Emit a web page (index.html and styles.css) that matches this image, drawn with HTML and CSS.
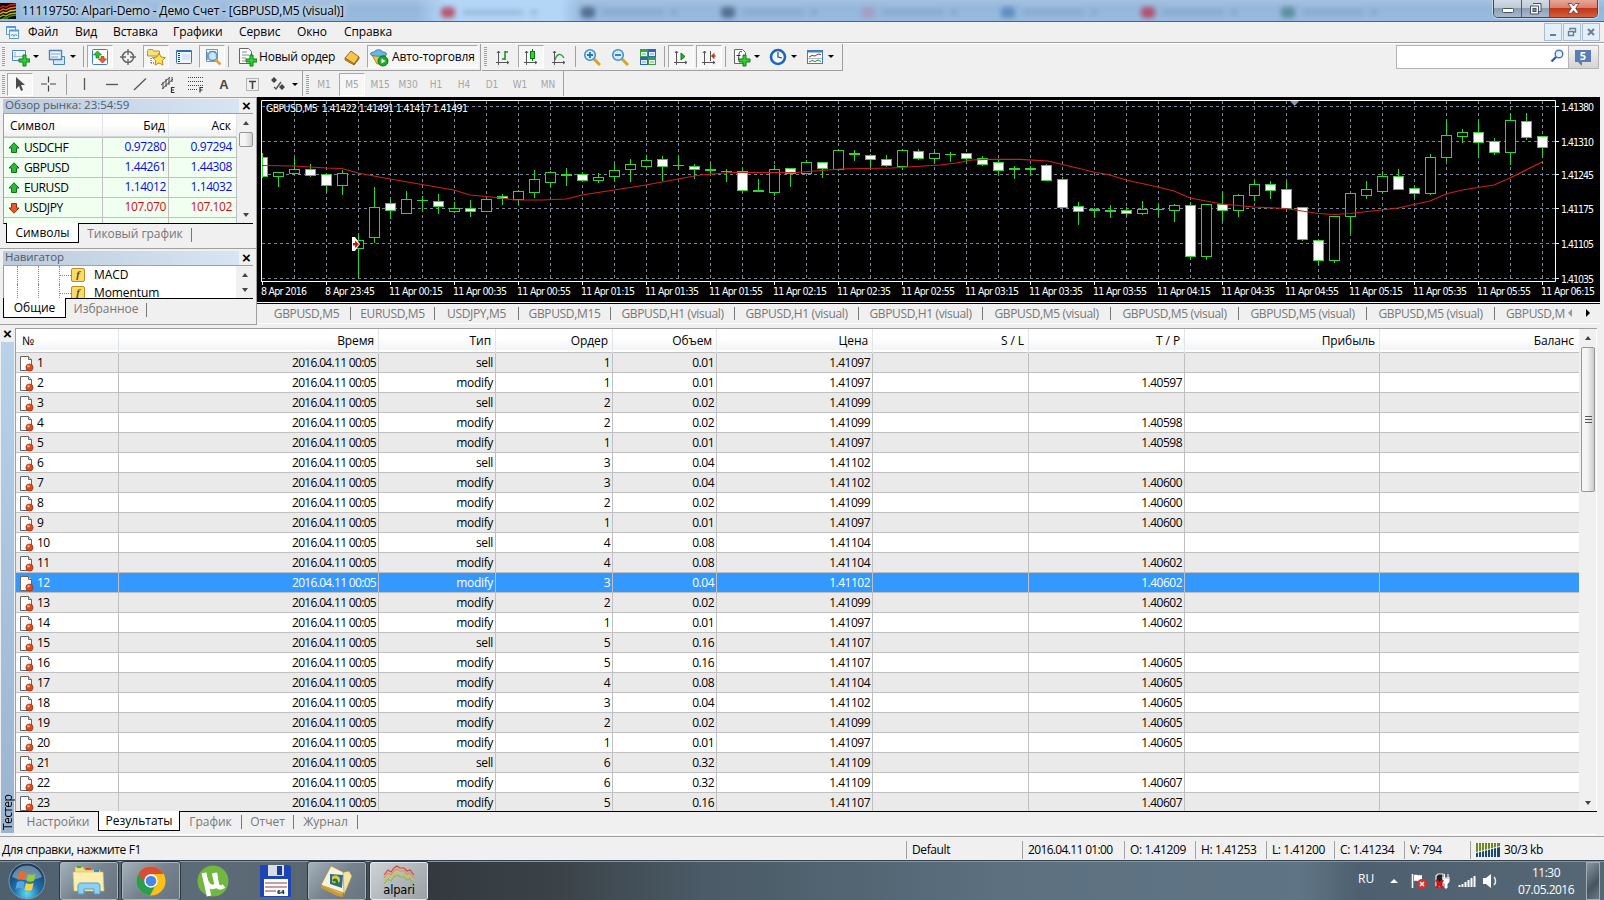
FILE: index.html
```html
<!DOCTYPE html>
<html lang="ru">
<head>
	<meta charset="utf-8">
	<title>11119750: Alpari-Demo - Демо Счет</title>
	<link rel="stylesheet" href="styles.css">
</head>
<body>

<div class="titlebar">
	<svg class="app-logo" width="16" height="16" viewBox="0 0 16 16"><rect width="16" height="16" fill="#150800"/><g fill="none" stroke-width="1.3"><path d="M0 5l3-2 3 1 4-2 6-1" stroke="#e02010"/><path d="M0 8l3-2 3 1 4-2 6-1" stroke="#f06a10"/><path d="M0 11l3-2 3 1 4-2 6-1" stroke="#f0c020"/><path d="M0 14l3-2 3 1 4-2 6-1" stroke="#90c020"/><path d="M2 16l2-1 3 0 3-2 6-1" stroke="#2a9a20"/></g></svg>
	<span class="title-text">11119750: Alpari-Demo - Демо Счет - [GBPUSD,M5 (visual)]</span>
	<div class="glass">
		<i class="g-red"></i><i class="g-dark"></i><i class="g-dark"></i><i class="g-pink"></i><i class="g-blue"></i><i class="g-red"></i><i class="g-green"></i>
	</div>
	<div class="win-buttons">
		<span class="wb"><svg width="12" height="12"><rect x=".5" y="5.5" width="11" height="4" rx="1" fill="#fff" stroke="#4a5460"/></svg></span>
		<span class="wb"><svg width="13" height="13"><path d="M4 1.5h8v8h-3M1.500 4h8v8h-8z" fill="#eef2f6" stroke="#4a5460"/><rect x="4" y="6.500" width="3" height="3" fill="#8b9098" stroke="#4a5460"/></svg></span>
		<span class="wb wb-close"><svg width="13" height="11"><path d="M1 .5h3.500l2 2.500 2-2.500H12L8.700 5.300 12 10.300H8.500l-2-2.700-2 2.700H1l3.300-5z" fill="#fff" stroke="#5d3a3a" stroke-width=".8"/></svg></span>
	</div>
</div>

<div class="menubar">
	<svg class="doc-icon" width="15" height="15" viewBox="0 0 15 15"><g fill="#eef6fd" stroke="#5b9ad0"><path d="M1.500 1.500h9v8h-9z"/><path d="M1 2h10" stroke-width="2"/><path d="M4.500 5.500h9v8h-9z"/><path d="M4 5.500h10" stroke-width="2"/><path d="M6 11l1.500-2 1.500 2.500 1.500-2.500 1.500 2" fill="none"/></g></svg>
	<span class="m1">Файл</span><span class="m2">Вид</span><span class="m3">Вставка</span><span class="m4">Графики</span><span class="m5">Сервис</span><span class="m6">Окно</span><span class="m7">Справка</span>
	<div class="mdi">
		<b><svg width="10" height="10"><path d="M2 8h6" stroke="#6a7f96" stroke-width="2"/></svg></b>
		<b><svg width="10" height="10"><path d="M3 3V1.500h5.500V5H7M1.500 4.500h5v4h-5z" fill="none" stroke="#6a7f96" stroke-width="1.400"/></svg></b>
		<b><svg width="10" height="10"><path d="M2 2l6 6M8 2L2 8" stroke="#6a7f96" stroke-width="2"/></svg></b>
	</div>
</div>

<div class="toolrow">
	<div class="toolbar main-tools">
		<span class="grip"></span>
		<span class="dd"><svg width="20" height="20" viewBox="0 0 20 20"><path d="M2.500 3.500h13v10h-13z" fill="#eef6fc" stroke="#4f87bd"/><path d="M5 5v6M3.500 9.500H13" stroke="#9bb9d5"/><path d="M9 12h4V8h3v4h4v3h-4v4h-3v-4H9z" fill="#2fd12f" stroke="#0b7d12"/></svg></span>
		<span class="dd"><svg width="20" height="20" viewBox="0 0 20 20"><path d="M6.500 9.500h11v8h-11z" fill="#d4e8f8" stroke="#4b83bb"/><path d="M2.500 3.500h12v9h-12z" fill="#edf6fd" stroke="#4b83bb" stroke-width="1.400"/><path d="M4 7h9M4 10h7" stroke="#7fa5cc"/></svg></span>
		<span class="sep"></span>
		<span class="btn on"><svg width="18" height="18" viewBox="0 0 18 18"><rect x="1.500" y="1.500" width="15" height="15" rx="1" fill="#fff" stroke="#3d7fc0"/><path d="M6.500 3l4 4h-2.500v3H5V7H2.500z" fill="#2fc12f" stroke="#0d7a15" stroke-width=".7"/><path d="M11.500 15l4-4H13V8.500h-3V11H7.500z" fill="#ee6030" stroke="#a03010" stroke-width=".7"/></svg></span>
		<span class="btn"><svg width="18" height="18" viewBox="0 0 18 18"><circle cx="9" cy="9" r="5.500" fill="none" stroke="#666" stroke-width="1.500"/><path d="M9 1v6M9 11v6M1 9h6M11 9h6" stroke="#666" stroke-width="1.300"/></svg></span>
		<span class="btn on"><svg width="20" height="20" viewBox="0 0 20 20"><path d="M1.500 9V3.500l1-1h4l1 1.500h6V9z" fill="#f5e17b" stroke="#b9962a"/><path d="M5 11v6M5 16h4" stroke="#444" stroke-dasharray="1 1"/><path d="M13 6l2 4 4.500.6-3.300 3 .8 4.500-4-2.200-4 2.200.8-4.500-3.300-3L11 10z" fill="#ffe45a" stroke="#b48c13"/></svg></span>
		<span class="btn"><svg width="18" height="18" viewBox="0 0 18 18"><rect x="1.500" y="2.500" width="15" height="13" rx="1" fill="#eef6fd" stroke="#2f78bd"/><path d="M1.500 3h15" stroke="#2c6cb0" stroke-width="2"/><path d="M4 5v10" stroke="#1c3c70" stroke-width="2" stroke-dasharray="1 1"/><path d="M7 7h8M7 9h8M7 11h8" stroke="#bed5ec"/></svg></span>
		<span class="btn on"><svg width="20" height="20" viewBox="0 0 20 20"><path d="M4.500 2.500h11v12h-11z" fill="#eef4fa" stroke="#7d99b5"/><path d="M5 5v8M8 4v9M13 4v6" stroke="#506c8a"/><circle cx="10.500" cy="9" r="4.500" fill="#c8e3f6" fill-opacity=".8" stroke="#5490c0" stroke-width="1.300"/><path d="M13.500 12.500l5 5" stroke="#e0a92c" stroke-width="2.600"/></svg></span>
		<span class="sep"></span>
		<span class="btn wide order"><svg width="20" height="20" viewBox="0 0 20 20"><path d="M2.500 1.500h9l3 3v12h-12z" fill="#fff" stroke="#666"/><path d="M5 5h5M5 8h7M5 11h4M5 14h3" stroke="#888"/><path d="M9 12h4V8h3v4h4v3h-4v4h-3v-4H9z" fill="#2fd12f" stroke="#0b7d12"/></svg><em>Новый ордер</em></span>
		<span class="btn"><svg width="18" height="18" viewBox="0 0 18 18"><path d="M2 10L8 3l8 6-5 7z" fill="#f5c64b" stroke="#9a6b14"/><path d="M2 10v2l9 5v-1.500zM11 17l5-6V9z" fill="#c98f22" stroke="#8c5d10" stroke-width=".7"/></svg></span>
		<span class="btn wide auto on"><svg width="20" height="20" viewBox="0 0 20 20"><path d="M3 8l5 9h5l4-9z" fill="#f2cb3d" stroke="#b98b1a"/><path d="M1.500 7c0-2 3-2 4-2 1-3 7-3 8 0 2 0 4 .5 4 2 0 3-16 3-16 0z" fill="#6cb5e2" stroke="#3c86b8"/><circle cx="14" cy="14" r="5" fill="#22ab2c" stroke="#0d7216"/><path d="M12.500 11.500v5l4-2.500z" fill="#fff"/></svg><em>Авто-торговля</em></span>
	</div>
	<div class="toolbar chart-tools">
		<span class="grip"></span>
		<span class="btn"><svg width="18" height="18" viewBox="0 0 18 18"><path d="M4.500 3v14M2 14.500h13M3 5l1.500-2L6 5M13 13l2 1.500L13 16" stroke="#555" fill="none"/><path d="M11 4h3M11 3v9M8 11h3" stroke="#1e8b28" stroke-width="1.500"/></svg></span>
		<span class="btn on"><svg width="18" height="18" viewBox="0 0 18 18"><path d="M4.500 3v14M2 14.500h13M3 5l1.500-2L6 5M13 13l2 1.500L13 16" stroke="#555" fill="none"/><path d="M10.500 1v12" stroke="#087a12"/><rect x="8.500" y="3.500" width="4" height="7" fill="#31d23b" stroke="#087a12"/></svg></span>
		<span class="btn"><svg width="18" height="18" viewBox="0 0 18 18"><path d="M4.500 3v14M2 14.500h13M3 5l1.500-2L6 5M13 13l2 1.500L13 16" stroke="#555" fill="none"/><path d="M5 12c2-7 6-7 9-2" stroke="#2b9a35" fill="none" stroke-width="1.300"/></svg></span>
		<span class="sep"></span>
		<span class="btn"><svg width="18" height="18" viewBox="0 0 18 18"><path d="M11 11l6 6" stroke="#d8a51f" stroke-width="3"/><circle cx="7" cy="7" r="5.300" fill="#d5ecfb" stroke="#3f8ccb" stroke-width="1.500"/><path d="M7 4v6M4 7h6" stroke="#2875b8" stroke-width="1.800"/></svg></span>
		<span class="btn"><svg width="18" height="18" viewBox="0 0 18 18"><path d="M11 11l6 6" stroke="#d8a51f" stroke-width="3"/><circle cx="7" cy="7" r="5.300" fill="#d5ecfb" stroke="#3f8ccb" stroke-width="1.500"/><path d="M4 7h6" stroke="#2875b8" stroke-width="1.800"/></svg></span>
		<span class="btn"><svg width="18" height="18" viewBox="0 0 18 18"><path d="M1 1h8v8H1zM9 9h8v8H9z" fill="#3ea03a"/><path d="M9 1h8v8H9zM1 9h8v8H1z" fill="#2d67c0"/><path d="M2 4h6v4H2zM10 4h6v4h-6zM2 12h6v4H2zM10 12h6v4h-6z" fill="#e4eefb"/><path d="M3 6h4M11 6h4M3 14h4M11 14h4" stroke="#8aa"/></svg></span>
		<span class="sep"></span>
		<span class="btn on"><svg width="18" height="18" viewBox="0 0 18 18"><path d="M4.500 3v14M2 14.500h13M3 5l1.500-2L6 5M13 13l2 1.500L13 16" stroke="#555" fill="none"/><path d="M9 5v7l4-3.500z" fill="#27b335" stroke="#0c7a17"/></svg></span>
		<span class="btn on"><svg width="18" height="18" viewBox="0 0 18 18"><path d="M4.500 3v14M2 14.500h13M3 5l1.500-2L6 5M13 13l2 1.500L13 16M10.500 3v10" stroke="#555" fill="none"/><path d="M16 8h-4M14 5.500L11.500 8l2.500 2.500z" stroke="#bb3c14" fill="#bb3c14"/></svg></span>
		<span class="sep"></span>
		<span class="dd"><svg width="20" height="20" viewBox="0 0 20 20"><path d="M3.500 2.500h8l3 3v11h-11z" fill="#fff" stroke="#666"/><path d="M11 5c-3-2-3 1-3.500 8M5.500 8.500h4" fill="none" stroke="#333"/><path d="M8 12h4V8h3v4h4v3h-4v4h-3v-4H8z" fill="#2fd12f" stroke="#0b7d12"/></svg></span>
		<span class="dd"><svg width="20" height="20" viewBox="0 0 20 20"><circle cx="10" cy="10" r="7" fill="#eff7fe" stroke="#1e66bb" stroke-width="2.600"/><path d="M10 5v5l4 1" fill="none" stroke="#444" stroke-width="1.200"/></svg></span>
		<span class="dd"><svg width="20" height="20" viewBox="0 0 20 20"><rect x="2.500" y="3.500" width="15" height="13" fill="#fff" stroke="#3f7fbe"/><path d="M2 4.500h16" stroke="#3f7fbe" stroke-width="2"/><path d="M4 10l3-1.500 3 .5 3-2 3 .5" stroke="#a0281c" fill="none"/><path d="M3 11.500h14" stroke="#9bbbd8"/><path d="M4 15l3-1.500 3 1 3-1.500 3 1.500" stroke="#2a8a35" fill="none"/></svg></span>
	</div>
	<div class="search">
		<div class="search-box"><svg width="14" height="14" viewBox="0 0 14 14"><circle cx="9" cy="5" r="3.800" fill="#e6f2fc" stroke="#4b71bf" stroke-width="1.400"/><path d="M6 8l-4.500 4.500" stroke="#2b57b5" stroke-width="2.300"/></svg></div>
		<div class="chat"><span>5</span></div>
	</div>
</div>

<div class="toolrow second">
	<div class="toolbar draw-tools">
		<span class="grip"></span>
		<span class="btn on"><svg width="18" height="18" viewBox="0 0 18 18"><path d="M5 2v12l3-3 2 5 2-1-2-5h4z" fill="#4a4a4a"/></svg></span>
		<span class="btn"><svg width="18" height="18" viewBox="0 0 18 18"><path d="M9.500 1.500v6M9.500 10.500v6M2 9h6M11 9h6" stroke="#444" stroke-width="1.200"/></svg></span>
		<span class="sep"></span>
		<span class="btn"><svg width="18" height="18"><path d="M9.500 3v12" stroke="#555" stroke-width="1.300"/></svg></span>
		<span class="btn"><svg width="18" height="18"><path d="M3 9.500h12" stroke="#555" stroke-width="1.300"/></svg></span>
		<span class="btn"><svg width="18" height="18"><path d="M3 15L15 3.500" stroke="#555" stroke-width="1.300"/></svg></span>
		<span class="btn"><svg width="18" height="18" viewBox="0 0 18 18"><path d="M2 10L11 2M3 14L14 4M4 7v7M7 4v8M10 3v7M13 2v5" stroke="#444"/><path d="M15.500 12.500h-3v5h3M12.500 15h2.500" fill="none" stroke="#333" stroke-width="1.200"/></svg></span>
		<span class="btn"><svg width="18" height="18" viewBox="0 0 18 18"><path d="M1 2.500h15M1 6.500h15M1 10.500h15M1 14.500h9" stroke="#444" stroke-dasharray="1 1"/><path d="M16 12.500h-3v5M13 15h2.500" fill="none" stroke="#333" stroke-width="1.200"/></svg></span>
		<span class="btn letter">A</span>
		<span class="btn"><svg width="18" height="18" viewBox="0 0 18 18"><rect x="3.500" y="3.500" width="12" height="12" fill="none" stroke="#777" stroke-dasharray="1 1"/><path d="M6 6.500h7M9.500 6.500V14" stroke="#444" stroke-width="1.600"/></svg></span>
		<span class="dd"><svg width="18" height="18" viewBox="0 0 18 18"><path d="M5 2l3 3-3 3-3-3zM13 9l3 3-3 3-3-3z" fill="#444"/><path d="M5 12l2 2 5-7" fill="none" stroke="#555" stroke-width="1.400"/></svg></span>
	</div>
	<div class="toolbar period-tools">
		<span class="grip"></span>
		<span class="btn">M1</span><span class="btn on">M5</span><span class="btn">M15</span><span class="btn">M30</span><span class="btn">H1</span><span class="btn">H4</span><span class="btn">D1</span><span class="btn">W1</span><span class="btn">MN</span>
	</div>
</div>

<div class="workspace">
	<div class="side">
		<div class="panel market">
			<div class="caption"><span>Обзор рынка: 23:54:59</span><i class="x">×</i></div>
			<div class="panel-body">
				<div class="quotes">
					<div class="q-head"><span>Символ</span><span>Бид</span><span>Аск</span></div>
					<div class="q-row up"><span><svg width="12" height="12"><use href="#arrow"/></svg>USDCHF</span><span>0.97280</span><span>0.97294</span></div>
					<div class="q-row up"><span><svg width="12" height="12"><use href="#arrow"/></svg>GBPUSD</span><span>1.44261</span><span>1.44308</span></div>
					<div class="q-row up"><span><svg width="12" height="12"><use href="#arrow"/></svg>EURUSD</span><span>1.14012</span><span>1.14032</span></div>
					<div class="q-row down"><span><svg width="12" height="12"><use href="#arrow"/></svg>USDJPY</span><span>107.070</span><span>107.102</span></div>
					<div class="q-row"><span></span><span></span><span></span></div>
				</div>
				<div class="scroll"><i class="up-arrow"></i><i class="thumb"></i><i class="down-arrow"></i></div>
			</div>
			<div class="tabs"><span class="tab active t-sym">Символы</span><span class="tab t-tick">Тиковый график</span></div>
		</div>
		<div class="panel navi">
			<div class="caption"><span>Навигатор</span><i class="x">×</i></div>
			<div class="panel-body">
				<div class="tree">
					<div class="node"><u></u><u></u><u></u><b>f</b>MACD</div>
					<div class="node"><u></u><u></u><u></u><b>f</b>Momentum</div>
				</div>
				<div class="scroll"><i class="up-arrow"></i><i class="down-arrow"></i></div>
			</div>
			<div class="tabs"><span class="tab active t-common">Общие</span><span class="tab t-fav">Избранное</span></div>
		</div>
	</div>
	<div class="chart-area">
		<svg id="chart" class="chart" width="1343" height="205" viewBox="257 97 1343 205"></svg>
		<div class="chart-tabs">
			<span class="w88">GBPUSD,M5</span><span class="w84">EURUSD,M5</span><span class="w84">USDJPY,M5</span><span class="w92">GBPUSD,M15</span><span class="w124">GBPUSD,H1 (visual)</span><span class="w124">GBPUSD,H1 (visual)</span><span class="w124">GBPUSD,H1 (visual)</span><span class="w128">GBPUSD,M5 (visual)</span><span class="w128">GBPUSD,M5 (visual)</span><span class="w128">GBPUSD,M5 (visual)</span><span class="w128">GBPUSD,M5 (visual)</span><span class="cut">GBPUSD,M</span>
			<i class="tri-left"></i><i class="tri-right"></i>
		</div>
	</div>
</div>

<div class="tester">
	<div class="tester-side"><i class="x">×</i><div class="tester-caption">Тестер</div></div>
	<div class="tester-main">
		<div class="results">
			<div class="grid" id="results">
				<div class="row head"><span>№</span><span>Время</span><span>Тип</span><span>Ордер</span><span>Объем</span><span>Цена</span><span>S / L</span><span>T / P</span><span>Прибыль</span><span>Баланс</span></div>
			</div>
			<div class="scroll"><i class="up-arrow"></i><i class="thumb"></i><i class="down-arrow"></i></div>
		</div>
		<div class="tabs"><span class="tab t-set">Настройки</span><span class="tab active t-res">Результаты</span><span class="tab t-gr">График</span><span class="tab t-rep">Отчет</span><span class="tab t-jour">Журнал</span></div>
	</div>
</div>

<div class="statusbar">
	<span class="help">Для справки, нажмите F1</span><span class="s1">Default</span><span class="s2">2016.04.11 01:00</span><span class="s3">O: 1.41209</span><span class="s4">H: 1.41253</span><span class="s5">L: 1.41200</span><span class="s6">C: 1.41234</span><span class="s7">V: 794</span>
	<span class="s8"><svg width="24" height="14" viewBox="0 0 24 14"><path d="M0 0h24v3L0 9z" fill="#6b8a1e"/><path d="M0 10l24-6v10H0z" fill="#174a72"/><path d="M2.500 0v14M5.500 0v14M8.500 0v14M11.500 0v14M14.500 0v14M17.500 0v14M20.500 0v14" stroke="#f0f0f0"/></svg>30/3 kb</span>
</div>

<div class="taskbar">
	<div class="start"><svg width="38" height="38" viewBox="0 0 38 38"><defs><radialGradient id="orb" cx=".5" cy=".85" r=".8"><stop offset="0" stop-color="#5fd8f5"/><stop offset=".45" stop-color="#1f6ea8"/><stop offset="1" stop-color="#16395c"/></radialGradient></defs><circle cx="19" cy="19" r="18" fill="url(#orb)" stroke="#7d97ab"/><path d="M4 15a15.500 15.500 0 0130 0c-8 4-22 4-30 0z" fill="#fff" opacity=".35"/><path d="M11 11c3-2 5-1.500 7.500 0L17 18c-2.500-1.500-5-1.500-7.500 0z" fill="#ee6a2c"/><path d="M20 12c2.500 1.500 5 1 7.500 0L26 19c-2.500 1-5 1-7.500 0z" fill="#9acb3b"/><path d="M9 20c3-1.500 5-1.500 7.500 0L15 27c-2.500-1.500-5-1.500-7.500 0z" fill="#4fa8e6"/><path d="M18 21c2.500 1.500 5 1 7.500 0L24 28c-2.500 1-5 1-7.500 0z" fill="#fbd23c"/></svg></div>
	<div class="task open t-explorer"><svg width="34" height="32" viewBox="0 0 34 32"><path d="M3 2h8l2 3h15v4H3z" fill="#f3dc86" stroke="#c9a94a" stroke-width=".6"/><path d="M5 1h4v2H5z" fill="#2ba84a"/><path d="M14 3h5v2h-5z" fill="#d9472b"/><path d="M22 5h5v2h-5z" fill="#2a7fc4"/><path d="M1 7h30l1 19H2z" fill="#fbeeae" stroke="#d7bd62" stroke-width=".6"/><path d="M6 29V21c0-2 1-3 3-3h16c2 0 3 1 3 3v8h-6v-5H12v5z" fill="#8fd0f2" stroke="#4a9fd0"/></svg></div>
	<div class="task open t-chrome"><svg width="30" height="30" viewBox="0 0 30 30"><circle cx="15" cy="15" r="14.500" fill="#fbc116"/><path d="M2.400 7.700A14.500 14.500 0 0014 29.500l6-11L15 15l-5 1z" fill="#2a9d55"/><path d="M2.400 7.700A14.500 14.500 0 0127.600 8H15a7 7 0 00-6.500 9z" fill="#dc4a38"/><circle cx="15" cy="15" r="6.700" fill="#fff"/><circle cx="15" cy="15" r="5.300" fill="#4a86e8"/></svg></div>
	<div class="task t-ut"><svg width="32" height="32" viewBox="0 0 32 32"><circle cx="16" cy="16" r="15.500" fill="#72b840"/><path d="M7 8c1 5 2 13 8 14 4 0 5-3 4-7l-1-7" fill="none" stroke="#fff" stroke-width="4.500"/><path d="M17 8l3 12c1 3 4 3 7 1M7 8l5 23" fill="none" stroke="#fff" stroke-width="4.500"/></svg></div>
	<div class="task t-save"><svg width="31" height="32" viewBox="0 0 31 32"><path d="M0 0h29l2 2v30H0z" fill="#1c46b8"/><path d="M8 0h16v11H8z" fill="#d8dde6"/><path d="M17 1h5v9h-5z" fill="#1c3a96"/><path d="M4 14h24v17H4z" fill="#fff"/><path d="M5 18h22M5 22h22M5 26h11" stroke="#9a3a3a"/><text x="17" y="28.500" class="floppy-text">64</text></svg></div>
	<div class="task open t-photo"><svg width="34" height="32" viewBox="0 0 34 32"><path d="M1 21l17-7 14-5-9 20-5 2z" fill="#e0b54a" stroke="#8d6a22" stroke-width=".7"/><path d="M20 8l9-2 3 5-8 19z" fill="#f4e3a6" stroke="#a58541" stroke-width=".6"/><path d="M1 20L11 1l12 6 1 21z" fill="#fbf4d4" stroke="#a58541" stroke-width=".6"/><path d="M10 9l13 1-1 13-12-4z" fill="#2a6b9b"/><path d="M12 12c3-3 8-1 8 3s-5 4-8 2z" fill="#e2cc3a"/><path d="M13 16c3-3 5 0 3 4" fill="none" stroke="#1c7a3a" stroke-width="2.500"/><path d="M1 20l17 8 5 1v3l-6-1-16-8z" fill="#c89b37"/></svg></div>
	<div class="task open active t-alpari"><svg width="32" height="19" viewBox="0 0 32 19"><g fill="none" stroke-width="1.100"><path d="M1 10l4-5 3 2 3-4 3-2 3 2 4 0 3 3 3-1 4 5" stroke="#d8402a"/><path d="M1 13l4-5 3 2 3-4 3-2 3 2 4 0 3 3 3-1 4 5" stroke="#e58a5a"/><path d="M1 16l4-5 3 2 3-4 3-2 3 2 4 0 3 3 3-1 4 5" stroke="#d2c44a"/><path d="M1 19l4-5 3 2 3-4 3-2 3 2 4 0 3 3 3-1 4 5" stroke="#8aba54"/></g></svg><span>alpari</span></div>
	<div class="tray">
		<span class="lang">RU</span><i class="tri-up"></i>
		<svg width="18" height="18" viewBox="0 0 18 18"><path d="M2.500 2v14" stroke="#fff" stroke-width="1.600"/><path d="M4 3c3-1 4 1 8 0v6c-4 1-5-1-8 0z" fill="#fff"/><circle cx="12" cy="12" r="5" fill="#d8302a"/><path d="M10 10l4 4M14 10l-4 4" stroke="#fff" stroke-width="1.400"/></svg>
		<svg width="18" height="18" viewBox="0 0 18 18"><path d="M2 4l2-2h5v12H2z" fill="#222" stroke="#eee" stroke-width="1.200"/><path d="M8 6h8M10.500 2v4M14 2v4M9 7h6v3l-2 2v4h-2v-4l-2-2z" fill="#fff" stroke="#fff"/><path d="M2 8l7 8M9 8l-7 8" stroke="#e01212" stroke-width="2.600"/></svg>
		<svg width="18" height="14" viewBox="0 0 18 14"><path d="M1.500 13v-2M4.500 13v-3M7.500 13V8M10.500 13V6M13.500 13V4M16.500 13V2" stroke="#fff" stroke-width="2"/></svg>
		<svg width="16" height="16" viewBox="0 0 16 16"><path d="M1 5h3l5-4v14l-5-4H1z" fill="#fff"/><path d="M12 4c2 2 2 6 0 8" stroke="#e8eef2" fill="none" stroke-width="1.500"/></svg>
		<div class="clock"><div>11:30</div><div>07.05.2016</div></div>
		<div class="show-desktop"></div>
	</div>
</div>

<svg width="0" height="0" class="defs">
	<symbol id="arrow" viewBox="0 0 12 12"><path d="M6 .8l5 5.200H8.500v4.500h-5V6H1z"/></symbol>
	<symbol id="deal" viewBox="0 0 16 17"><path d="M1.500 1.500h8l3 3v11h-11z" fill="#fff" stroke="#666"/><path d="M9.500 1.500v3h3" fill="#ddd" stroke="#666"/><circle cx="10.500" cy="12.500" r="3.600" fill="#dd4a1c" stroke="#8e2a0c" stroke-width=".6"/><circle cx="9.500" cy="11.300" r="1.200" fill="#f7a98a"/></symbol>
</svg>
<script src="app.js"></script>
</body>
</html>
```
FILE: styles.css
```css
* {
	box-sizing: border-box;
}
body {
	margin: 0;
	width: 1604px;
	height: 900px;
	overflow: hidden;
	background: #f0f0f0;
	font-family: "Open Sans", "Noto Sans", sans-serif;
	font-size: 12px;
	line-height: 16px;
	color: #000;
	display: flex;
	flex-direction: column;
}
i, em, b, u {
	font-style: normal;
	font-weight: normal;
	text-decoration: none;
}
svg {
	display: block;
	flex: none;
}
.defs {
	position: absolute;
}

/* window title */
.titlebar {
	height: 22px;
	display: flex;
	align-items: flex-start;
	background: linear-gradient(#a4c2e0, #95b7dc 40%, #98bade);
	border-bottom: 1px solid #4c6484;
	flex: none;
}
.app-logo {
	margin-top: 3px;
}
.title-text {
	width: 330px;
	padding: 3px 0 0 6px;
	white-space: nowrap;
	text-shadow: 0 0 6px #fff, 0 0 8px #fff;
	letter-spacing: -0.17px;
}
.glass {
	flex: 1;
	height: 21px;
	display: flex;
	align-items: center;
	gap: 126px;
	padding: 4px 0 0 95px;
	overflow: hidden;
	background: linear-gradient(90deg, transparent 70px, #b3d5f6 100px, #b3d5f6 215px, transparent 235px);
}
.glass i {
	width: 14px;
	height: 11px;
	flex: none;
	border-radius: 4px;
	filter: blur(2.5px);
	opacity: .75;
}
.glass i::after {
	content: "";
	display: block;
	width: 74px;
	height: 5px;
	margin: 3px 0 0 22px;
	background: linear-gradient(90deg, #7897ba 60px, transparent 60px 68px, #7090b5 68px);
	opacity: .6;
}
.g-dark { background: #3c5878; }
.g-red { background: #b9304a; }
.g-pink { background: #a996be; }
.g-blue { background: #4f7fb5; }
.g-green { background: #4a8289; }
.win-buttons {
	width: 105px;
	height: 18px;
	margin-right: 6px;
	display: flex;
	border: 1px solid #39485c;
	border-top: 0;
	border-radius: 0 0 5px 5px;
	overflow: hidden;
	box-shadow: 0 0 0 1px #c5d9ec;
}
.wb {
	width: 28px;
	border-right: 1px solid #4d5c70;
	display: flex;
	align-items: center;
	justify-content: center;
	background: linear-gradient(#d2dbe6, #c0cbd8 45%, #8d9db2 50%, #a9bad0);
}
.wb-close {
	flex: 1;
	border: 0;
	background: linear-gradient(#e6a798, #d9806c 45%, #bf3618 50%, #d4603c);
}

/* menu */
.menubar {
	height: 21px;
	display: flex;
	align-items: center;
	border-bottom: 1px solid #a0a0a0;
	padding-left: 5px;
	letter-spacing: -0.1px;
	flex: none;
}
.doc-icon {
	margin-right: 8px;
}
.m1 { width: 47px; }
.m2 { width: 38px; }
.m3 { width: 60px; }
.m4 { width: 66px; }
.m5 { width: 58px; }
.m6 { width: 47px; }
.mdi {
	margin-left: auto;
	display: flex;
	gap: 1px;
	padding-right: 4px;
}
.mdi b {
	width: 18px;
	height: 18px;
	border: 1px solid #a9bdd0;
	background: #e3effa;
	display: flex;
	align-items: center;
	justify-content: center;
}

/* toolbars */
.toolrow {
	height: 28px;
	display: flex;
	border-top: 1px solid #fff;
	flex: none;
}
.second {
	height: 26px;
	border-top: 0;
}
.toolbar {
	display: flex;
	align-items: center;
	height: 27px;
	border-bottom: 1px solid #a0a0a0;
	border-right: 1px solid #a0a0a0;
	margin-right: 1px;
	padding-bottom: 1px;
}
.second .toolbar {
	height: 25px;
	border-bottom: 0;
	padding: 1px 0 0;
}
.main-tools { width: 481px; }
.chart-tools { width: 361px; }
.draw-tools { width: 303px; }
.period-tools { width: 260px; }
.grip {
	width: 3px;
	height: 19px;
	margin: 0 2px 0 2px;
	background: repeating-linear-gradient(#a0a0a0 0 1px, #f0f0f0 1px 2px);
	flex: none;
}
.second .grip {
	margin-right: 1px;
}
.btn {
	width: 26px;
	height: 23px;
	margin: 0 1px;
	display: flex;
	align-items: center;
	justify-content: center;
	flex: none;
}
.on {
	border: 1px solid #a8a8a8;
	border-right-color: #fff;
	border-bottom-color: #fff;
	background: #f7f7f7;
}
.dd {
	width: 37px;
	display: flex;
	align-items: center;
	justify-content: space-between;
	padding: 0 5px 0 3px;
	flex: none;
}
.dd::after {
	content: "";
	border: 3px solid transparent;
	border-top-color: #000;
	border-bottom: 0;
}
.sep {
	width: 1px;
	height: 21px;
	margin: 0 2px;
	background: #a0a0a0;
	flex: none;
}
.draw-tools .sep {
	margin: 0 3px 0 4px;
}
.btn.wide {
	justify-content: flex-start;
	gap: 2px;
	white-space: nowrap;
	letter-spacing: -0.2px;
}
.btn.order { width: 105px; padding-left: 5px; }
.btn.auto { width: 111px; padding-left: 1px; }
.auto em {
	letter-spacing: -0.1px;
	padding-left: 1px;
}
.letter {
	font: bold 13px "Liberation Sans", sans-serif;
	color: #444;
}
.period-tools .btn {
	font: 10px "DejaVu Sans Condensed", sans-serif;
	color: #a5a5a5;
}
.search {
	margin: 1px 5px 0 auto;
	display: flex;
	height: 24px;
}
.search-box {
	width: 173px;
	border: 1px solid #b4b4b4;
	background: #fff;
	display: flex;
	align-items: center;
	justify-content: flex-end;
	padding: 0 4px 2px 0;
}
.chat {
	width: 30px;
	border: 1px solid #b4b4b4;
	border-left: 0;
	background: linear-gradient(#f4f4f4, #d4d4d4);
	padding: 4px 0 0 6px;
}
.chat span {
	display: block;
	position: relative;
	width: 16px;
	height: 12px;
	background: #5d7cb4;
	color: #fff;
	font-weight: bold;
	font-size: 11px;
	line-height: 12px;
	text-align: center;
}
.chat span::after {
	content: "";
	position: absolute;
	left: 3px;
	top: 12px;
	border-top: 4px solid #5d7cb4;
	border-left: 4px solid transparent;
}

/* side panels + chart */
.workspace {
	height: 228px;
	display: flex;
	flex: none;
}
.side {
	width: 257px;
	border-top: 1px solid #a0a0a0;
	display: flex;
	flex-direction: column;
}
.panel {
	border-right: 1px solid #a0a0a0;
	border-bottom: 1px solid #a0a0a0;
	padding-left: 3px;
	display: flex;
	flex-direction: column;
}
.market { height: 151px; }
.navi { height: 76px; padding-top: 2px; }
.market .caption { margin-top: 1px; }
.caption {
	height: 14px;
	display: flex;
	line-height: 12px;
	color: #4d5b6b;
	flex: none;
}
.caption span {
	width: 237px;
	padding-left: 2px;
	background: linear-gradient(90deg, #bccbdc, #d7e5f3);
	font-size: 11.5px;
	letter-spacing: -0.05px;
}
.x {
	font: bold 15px/13px "Liberation Sans", sans-serif;
	color: #000;
	width: 14px;
	text-align: left;
}
.caption .x {
	margin-left: 3px;
}
.panel-body {
	width: 250px;
	border: 1px solid #a0a0a0;
	border-bottom: 1px solid #000;
	border-right: 0;
	background: #fff;
	display: flex;
	overflow: hidden;
	flex: none;
}
.market .panel-body { height: 111px; }
.navi .panel-body { height: 34px; }
.quotes {
	width: 233px;
}
.q-head, .q-row {
	display: grid;
	grid-template-columns: 99px 66px 68px;
}
.q-head {
	height: 23px;
	line-height: 23px;
	background: linear-gradient(#fff 45%, #f1f2f4);
	border-bottom: 1px solid #d5d5d5;
}
.q-head span {
	border-right: 1px solid #e0e3e8;
	padding: 0 3px 0 6px;
}
.q-head span:last-child {
	padding-right: 5px;
}
.q-head span + span, .q-row span + span {
	text-align: right;
}
.q-row {
	height: 20px;
	line-height: 18px;
	background: #f0fff0;
	border-top: 1px solid #c0c0c0;
}
.q-row span {
	border-right: 1px solid #c0c0c0;
	padding: 0 2px 0 4px;
	display: block;
	letter-spacing: -0.4px;
}
.q-row span:first-child {
	display: flex;
	align-items: center;
	gap: 4px;
	color: #000;
	letter-spacing: -0.4px;
}
.q-row span:last-child {
	padding-right: 4px;
}
.up { color: #0c0cdc; }
.down { color: #d01010; }
.up svg { fill: #2fb63c; stroke: #107018; }
.down svg { fill: #e8592c; stroke: #96300e; transform: rotate(180deg); }
.scroll {
	width: 17px;
	background: #f0f0f0;
	display: flex;
	flex-direction: column;
	align-items: center;
	flex: none;
}
.up-arrow, .down-arrow {
	border: 3px solid transparent;
	flex: none;
}
.up-arrow {
	border-bottom: 4px solid #444;
	border-top: 0;
	margin: 7px 0;
}
.down-arrow {
	border-top: 4px solid #444;
	border-bottom: 0;
	margin: auto 0 6px;
}
.thumb {
	width: 14px;
	height: 15px;
	border: 1px solid #979797;
	border-radius: 2px;
	background: linear-gradient(90deg, #f5f5f5 40%, #d0d1d4);
}
.tabs {
	display: flex;
	color: #777;
	height: 22px;
}
.tab {
	text-align: center;
	line-height: 18px;
	height: 19px;
}
.tab.active {
	background: #fff;
	color: #000;
	border: 1px solid #000;
	border-top: 0;
	margin-top: -1px;
	height: 20px;
	line-height: 20px;
}
.t-sym { width: 73px; margin-left: 3px; }
.t-tick, .t-fav {
	border-right: 1px solid #777;
	height: 14px;
	margin-top: 4px;
	line-height: 12px;
	letter-spacing: -0.05px;
}
.t-tick { width: 113px; }
.tab.t-common { width: 63px; border-left: 0; border-left: 1px solid #000; }
.t-fav { width: 81px; }
.tree {
	width: 233px;
	line-height: 18px;
}
.node {
	display: flex;
	height: 18px;
	padding-left: 13px;
	align-items: center;
	letter-spacing: -0.1px;
}
.node u {
	width: 21px;
	height: 18px;
	border-left: 1px dotted #888;
	flex: none;
}
.node u:nth-child(3) {
	width: 12px;
	background: linear-gradient(90deg, #888 50%, transparent 50%) 0 9px / 2px 1px repeat-x;
}
.node b {
	width: 14px;
	height: 14px;
	margin-right: 9px;
	border: 1px solid #b98f1e;
	border-radius: 2px;
	background: #f7dc6c;
	font: italic bold 11px/11px "Liberation Serif", serif;
	text-align: center;
	color: #6b4a00;
}
.chart-area {
	width: 1343px;
	display: flex;
	flex-direction: column;
}
.chart {
	background: #000;
}
.chart text {
	fill: #fff;
	font: 10.5px "DejaVu Sans Condensed", "Noto Sans", sans-serif;
}
.chart-tabs {
	display: flex;
	align-items: center;
	border-top: 1px solid #fff;
	border-bottom: 1px solid #fff;
	box-shadow: inset 0 1px #000;
	height: 22px;
	padding-left: 6px;
	color: #777;
}
.chart-tabs span {
	border-right: 1px solid #777;
	line-height: 13px;
	text-align: center;
	white-space: nowrap;
	flex: none;
	letter-spacing: -0.35px;
}
.w88 { width: 88px; }
.w84 { width: 84px; }
.w92 { width: 92px; }
.w124 { width: 124px; }
.w128 { width: 128px; }
.chart-tabs .cut {
	width: 68px;
	padding-left: 11px;
	text-align: left;
	border: 0;
}
.tri-left, .tri-right {
	border: 4px solid transparent;
}
.tri-left { border-left: 0; border-right-color: #999; margin: 0 14px 0 5px; }
.tri-right { border-right: 0; border-left-color: #000; }

/* strategy tester */
.tester {
	height: 511px;
	display: flex;
	padding-top: 3px;
	flex: none;
}
.tester-side {
	width: 15px;
	display: flex;
	flex-direction: column;
}
.tester-side .x {
	height: 14px;
	padding-left: 3px;
	line-height: 11px;
}
.tester-caption {
	width: 13px;
	height: 491px;
	margin-left: 1px;
	writing-mode: vertical-rl;
	transform: rotate(180deg);
	line-height: 13px;
	padding-top: 3px;
	letter-spacing: -0.6px;
	background: linear-gradient(#9ab3d0, #bad1ea);
}
.tester-main {
	width: 1582px;
}
.results {
	height: 484px;
	border: 1px solid #a0a0a0;
	border-right: 0;
	border-bottom: 1px solid #000;
	background: #fff;
	display: flex;
	overflow: hidden;
}
.grid {
	width: 1564px;
	border-right: 1px solid #f0f0f0;
}
.row {
	display: grid;
	grid-template-columns: 103px 260px 117px 117px 104px 156px 156px 156px 195px 200px;
	height: 20px;
	line-height: 20px;
	border-bottom: 1px solid #c0c0c0;
	letter-spacing: -0.5px;
}
.row span {
	border-right: 1px solid #c0c0c0;
	padding-right: 2px;
	text-align: right;
}
.row span:nth-child(2) {
	letter-spacing: -0.68px;
}
.row span:nth-child(3) {
	letter-spacing: -0.35px;
}
.row span:first-child {
	display: flex;
	align-items: center;
	text-align: left;
	gap: 2px;
	padding-left: 3px;
}
.row span:last-child {
	border-right: 0;
}
.row:nth-child(even) {
	background: #eaeaea;
}
.row.selected {
	background: #3399ff;
	color: #fff;
}
.row.head {
	height: 24px;
	line-height: 24px;
	background: linear-gradient(#fff 40%, #f1f2f4);
	box-shadow: inset 0 -2px #fff;
}
.row.head span {
	padding-right: 4px;
	border-color: #e2e5ea;
	letter-spacing: -0.1px;
}
.row.head span:first-child {
	padding-left: 6px;
}
.row.head span:last-child {
	padding-right: 6px;
}
.results .thumb {
	height: 145px;
	display: flex;
	background: linear-gradient(90deg, #f5f5f5 40%, #c8cace);
	align-items: center;
	justify-content: center;
}
.results .scroll {
	width: 16px;
}
.results .thumb::before {
	content: "";
	width: 7px;
	height: 8px;
	background: repeating-linear-gradient(#555 0 1px, transparent 1px 3px);
}
.tester .tabs {
	height: 23px;
	border-bottom: 1px solid #fff;
}
.tester .t-set { width: 83px; line-height: 19px; padding-left: 3px; }
.tester .t-res { width: 82px; }
.t-gr, .t-rep, .t-jour {
	border-right: 1px solid #777;
	height: 14px;
	margin-top: 3px;
	line-height: 13px;
}
.t-gr { width: 62px; }
.t-rep { width: 52px; }
.t-jour { width: 64px; }

.statusbar {
	height: 24px;
	border-top: 1px solid #a0a0a0;
	display: flex;
	align-items: center;
	padding-top: 3px;
	letter-spacing: -0.4px;
	white-space: nowrap;
	flex: none;
}
.statusbar span + span {
	border-left: 1px solid #a0a0a0;
	height: 18px;
	line-height: 18px;
	padding-left: 5px;
}
.statusbar .help { width: 906px; padding-left: 2px; letter-spacing: -0.35px; }
.s1 { width: 116px; }
.s2 { width: 102px; }
.statusbar .s2 { letter-spacing: -0.65px; }
.s3 { width: 71px; }
.s4 { width: 71px; }
.s5 { width: 68px; }
.s6 { width: 70px; }
.s7 { width: 66px; }
.s8 { display: flex; align-items: center; gap: 4px; }

/* windows taskbar */
.taskbar {
	height: 40px;
	border-top: 1px solid #34424e;
	box-shadow: inset 0 1px #8695a1;
	display: flex;
	align-items: center;
	background: linear-gradient(90deg, #4e5f6d 0, #5b6b78 200px, #5a6771 300px, #33393f 430px, #3b4348 560px, #4a5a66 700px, #5c7080 1000px, #5f7484 1300px, #4e6070 1360px, #566875 1604px);
	flex: none;
}
.start {
	width: 60px;
	padding-left: 8px;
}
.task {
	width: 58px;
	height: 38px;
	margin-right: 4px;
	display: flex;
	align-items: center;
	justify-content: center;
}
.open {
	border: 1px solid #a9b4bd;
	outline: 1px solid #2c3740;
	border-radius: 2px;
	background: linear-gradient(135deg, #a5b0b8, #76838e 50%, #66747f);
}
.active.task {
	flex-direction: column;
	background: linear-gradient(135deg, #cfd3d6, #b3b8bc 50%, #9ba1a6);
	border-color: #e4e8ea;
}
.t-alpari span {
	font: 11.5px/13px "DejaVu Sans", sans-serif;
	letter-spacing: -0.2px;
	margin-bottom: -1px;
}
.floppy-text {
	font: bold 5.5px "DejaVu Sans", sans-serif;
}
.tray {
	margin-left: auto;
	display: flex;
	align-items: center;
	color: #fff;
	height: 38px;
}
.lang { width: 32px; margin-top: -4px; }
.tri-up {
	border: 4px solid transparent;
	border-top: 0;
	border-bottom-color: #fff;
	margin-right: 12px;
}
.tray svg { margin-right: 6px; }
.clock {
	width: 80px;
	margin-left: 2px;
	text-align: center;
	line-height: 17px;
	letter-spacing: -0.5px;
}
.show-desktop {
	width: 14px;
	height: 38px;
	margin: 0 4px 0 0;
	border: 1px solid #a0adb7;
	background: linear-gradient(135deg, #8696a2, #46545f 60%, #6a7985);
	flex: none;
}
```
FILE: app.js
```javascript
// deals: type, order, volume, price, take profit
var deals = [
	['sell', 1, '0.01', '1.41097', ''],
	['modify', 1, '0.01', '1.41097', '1.40597'],
	['sell', 2, '0.02', '1.41099', ''],
	['modify', 2, '0.02', '1.41099', '1.40598'],
	['modify', 1, '0.01', '1.41097', '1.40598'],
	['sell', 3, '0.04', '1.41102', ''],
	['modify', 3, '0.04', '1.41102', '1.40600'],
	['modify', 2, '0.02', '1.41099', '1.40600'],
	['modify', 1, '0.01', '1.41097', '1.40600'],
	['sell', 4, '0.08', '1.41104', ''],
	['modify', 4, '0.08', '1.41104', '1.40602'],
	['modify', 3, '0.04', '1.41102', '1.40602'],
	['modify', 2, '0.02', '1.41099', '1.40602'],
	['modify', 1, '0.01', '1.41097', '1.40602'],
	['sell', 5, '0.16', '1.41107', ''],
	['modify', 5, '0.16', '1.41107', '1.40605'],
	['modify', 4, '0.08', '1.41104', '1.40605'],
	['modify', 3, '0.04', '1.41102', '1.40605'],
	['modify', 2, '0.02', '1.41099', '1.40605'],
	['modify', 1, '0.01', '1.41097', '1.40605'],
	['sell', 6, '0.32', '1.41109', ''],
	['modify', 6, '0.32', '1.41109', '1.40607'],
	['modify', 5, '0.16', '1.41107', '1.40607']
];
var selected = 12;

var rows = '';
deals.forEach(function (d, i) {
	var n = i + 1;
	var cells = ['2016.04.11 00:05', d[0], d[1], d[2], d[3], '', d[4], '', ''];
	rows += '<div class="row' + (n == selected ? ' selected' : '') + '">' +
		'<span><svg width="16" height="17"><use href="#deal"/></svg>' + n + '</span>' +
		cells.map(function (c) { return '<span>' + c + '</span>'; }).join('') + '</div>';
});
document.getElementById('results').insertAdjacentHTML('beforeend', rows);

// candles: high, body top, body bottom, low, w = falling, b = rising
var candles = [
	[153,157,176,177,'w'],[172,172,176,186,'b'],[158,169,173,174,'b'],[164,169,175,176,'w'],[174,174,185,190,'w'],
	[170,173,185,194,'b'],[234,240,248,277,'b'],[187,207,237,242,'b'],[200,203,210,218,'w'],[191,199,213,213,'b'],
	[196,200,200,211,'b'],[194,201,206,213,'w'],[202,208,211,212,'b'],[200,208,211,216,'w'],[197,199,211,211,'b'],
	[194,196,198,204,'w'],[190,191,199,204,'b'],[170,179,192,197,'b'],[171,172,182,186,'b'],[168,175,175,185,'w'],
	[172,174,180,180,'w'],[173,177,180,182,'b'],[164,170,176,180,'b'],[159,164,169,181,'b'],[155,160,166,167,'b'],
	[156,159,166,180,'w'],[156,165,165,168,'b'],[164,166,169,178,'w'],[164,170,170,173,'w'],[169,171,171,181,'b'],
	[167,171,190,190,'w'],[179,191,191,191,'w'],[165,169,192,195,'b'],[168,168,173,186,'w'],[160,162,173,173,'b'],
	[162,162,168,177,'w'],[150,150,169,170,'b'],[150,154,154,160,'w'],[154,155,159,168,'w'],[155,159,165,166,'w'],
	[150,150,166,168,'b'],[149,151,158,159,'w'],[152,153,158,163,'b'],[152,154,154,161,'b'],[153,153,158,163,'w'],
	[156,158,164,165,'w'],[160,162,170,174,'w'],[166,169,169,178,'w'],[166,169,169,174,'w'],[164,165,180,180,'w'],
	[177,179,207,207,'w'],[202,206,211,224,'w'],[208,210,210,216,'w'],[205,211,211,217,'w'],[207,210,213,214,'w'],
	[201,209,213,214,'b'],[204,209,209,214,'b'],[204,205,210,221,'b'],[202,205,256,258,'w'],[204,204,256,259,'b'],
	[192,204,210,221,'w'],[194,195,210,216,'b'],[180,184,195,200,'b'],[181,184,190,198,'w'],[182,189,208,209,'w'],
	[207,207,239,240,'w'],[240,240,260,264,'w'],[216,216,260,262,'b'],[193,193,216,233,'b'],[181,189,195,198,'b'],
	[171,176,191,193,'b'],[169,176,189,189,'w'],[185,188,193,197,'w'],[154,157,193,194,'b'],[119,135,157,160,'b'],
	[129,132,136,142,'b'],[119,132,142,157,'w'],[138,141,152,154,'w'],[113,120,152,164,'b'],[113,121,137,139,'w'],
	[136,136,147,157,'w']
];
var average = '262,165.500 294,166 326,168 342,168.500 358,173 390,179 454,190 470,195 502,198 514,200 542,200 566,199 582,195 646,185 678,179 700,175 732,172.500 796,172.500 840,169 892,168 940,165 956,163 972,160 988,159.300 1020,159.300 1048,161 1096,172.500 1110,175 1126,180 1158,187 1174,191 1190,198 1222,204 1254,207 1286,208.500 1318,213.500 1334,214.500 1350,213.500 1398,208 1430,201 1446,194 1462,190 1494,185 1510,178 1542,162';
var prices = [[106,'1.41380'],[141,'1.41310'],[174,'1.41245'],[208,'1.41175'],[243,'1.41105'],[278,'1.41035']];
// after the first labels the axis goes on in steps of 20 minutes
var times = ['8 Apr 2016', '8 Apr 23:45'];
for (var m = 15; m <= 375; m += 20) {
	times.push('11 Apr 0' + Math.floor(m / 60) + ':' + ('0' + m % 60).slice(-2));
}

var s = '<g stroke="#778899" stroke-dasharray="3 3" shape-rendering="crispEdges">';
prices.forEach(function (p) {
	s += '<path d="M262 ' + (p[0] + .5) + 'H1555"/>';
});
for (var x = 294; x < 1555; x += 32) {
	s += '<path d="M' + (x + .5) + ' 101V281"/>';
}
s += '</g>';

s += '<g stroke="#2fd62f" shape-rendering="crispEdges">';
candles.forEach(function (c, i) {
	var x = 262 + i * 16;
	var left = i ? x - 5 : x, w = i ? 10 : 5;
	if (c[1] == c[2]) {
		s += '<path d="M' + (x + .5) + ' ' + c[0] + 'V' + (c[3] + 1) + '"/>';
		s += c[4] == 'w' ? '<path d="M' + left + ' ' + c[1] + 'h11" stroke-width="2"/>' : '<path d="M' + left + ' ' + (c[1] + .5) + 'h11"/>';
		return;
	}
	s += '<path d="M' + (x + .5) + ' ' + c[0] + 'V' + (c[3] + 1) + '"/>';
	s += '<rect x="' + (left + .5) + '" y="' + (c[1] + .5) + '" width="' + w + '" height="' + (c[2] - c[1]) +
		'" fill="' + (c[4] == 'w' ? '#fff' : '#000') + '"/>';
});
s += '</g><polyline points="' + average + '" fill="none" stroke="#cc2020" stroke-width="1.200"/>';

s += '<path d="M261.500 281V100.500H1555.500V281.500H261" fill="none" stroke="#fff"/>';
prices.forEach(function (p) {
	s += '<path d="M1556 ' + (p[0] + .5) + 'h3" stroke="#fff"/>';
	s += '<text x="1561" y="' + (p[0] + 4.5) + '" textLength="33">' + p[1] + '</text>';
});
times.forEach(function (t, i) {
	var x = 262 + i * 64;
	s += '<path d="M' + (x + .5) + ' 282v3" stroke="#fff"/>';
	s += '<text x="' + (x - 1) + '" y="295" textLength="' + ([46, 50][i] || 54) + '">' + t + '</text>';
});
s += '<text x="266" y="112" textLength="202" xml:space="preserve">GBPUSD,M5  1.41422 1.41491 1.41417 1.41491</text>';
s += '<path d="M1290 101h9l-4.500 5z" fill="#8b97a8"/>';
s += '<path d="M352 237h3l5 7-5 7h-3z" fill="#fff"/><path d="M353 243h2v-2.500l4 3.800-4 3.800v-2.500h-2z" fill="#d01010"/>';
document.getElementById('chart').innerHTML = s;
```
